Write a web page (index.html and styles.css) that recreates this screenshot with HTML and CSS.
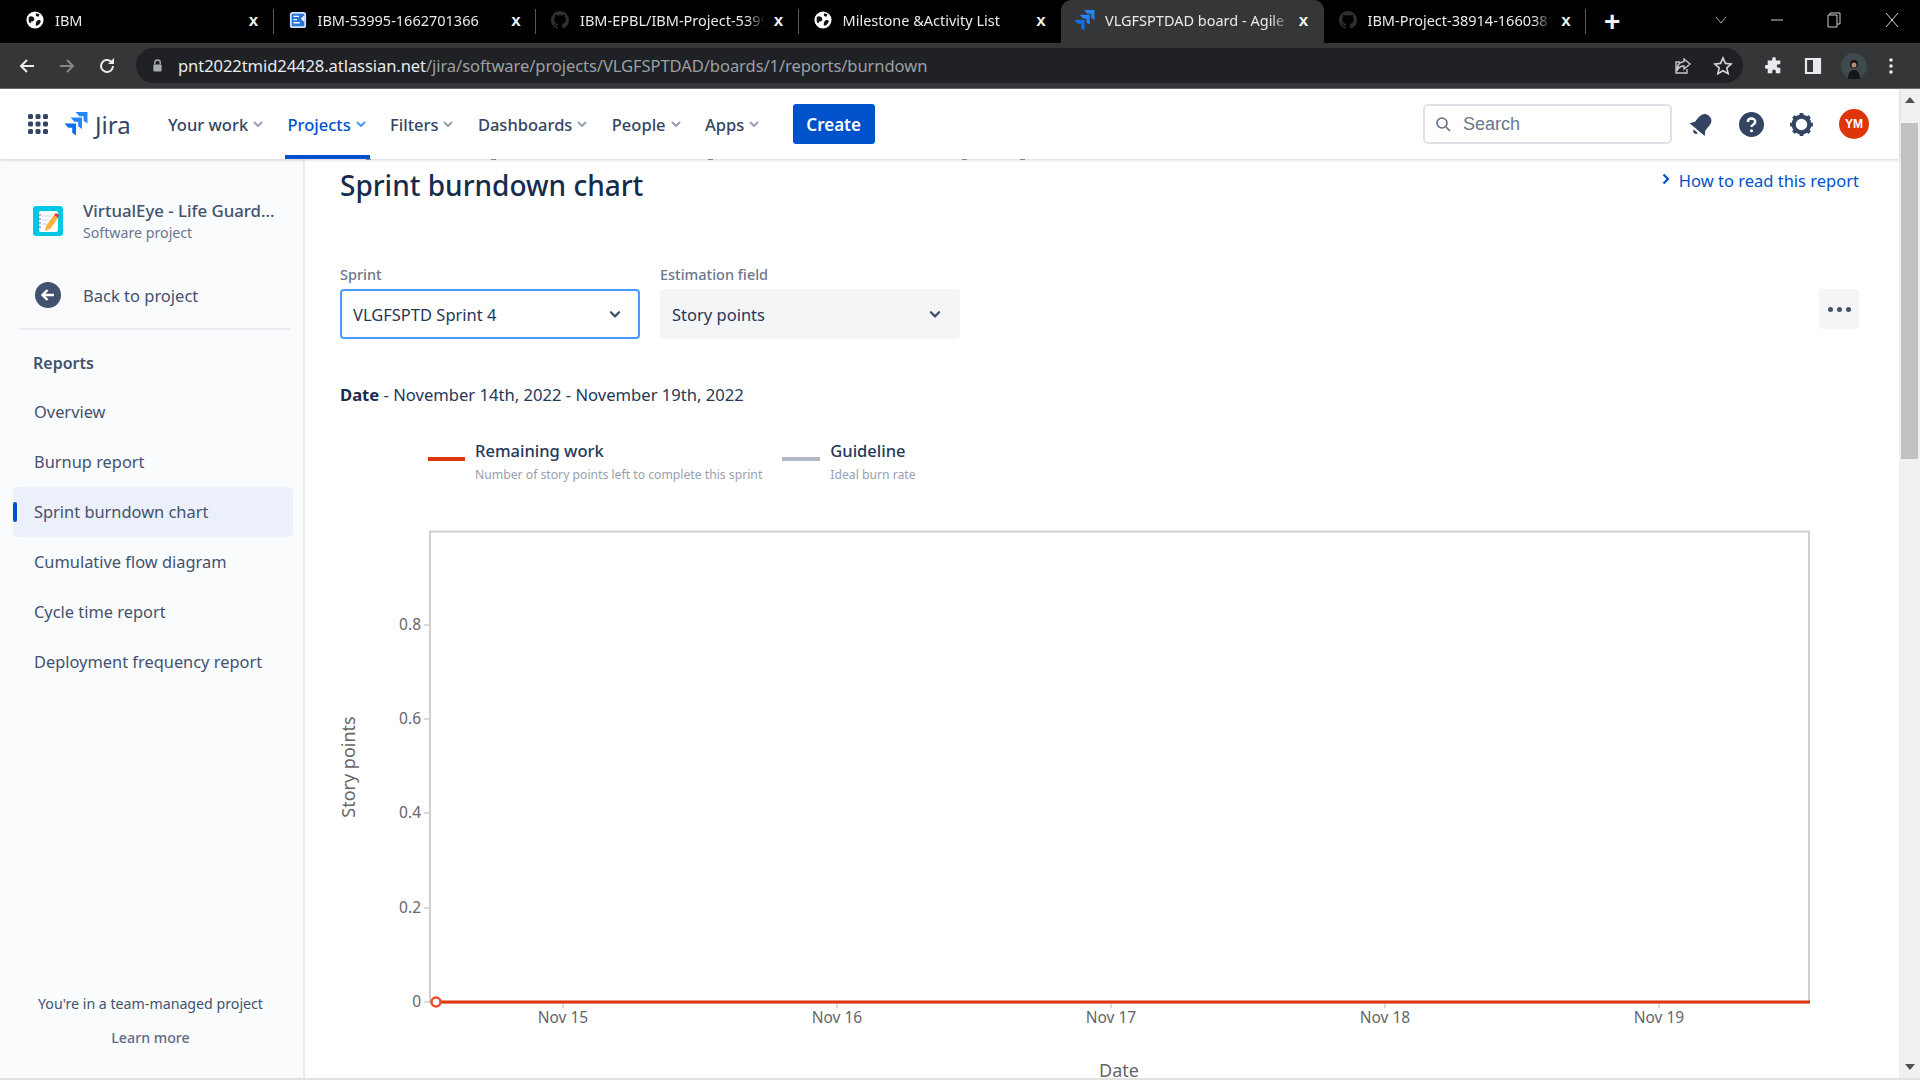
FILE: index.html
```html
<!DOCTYPE html>
<html lang="en">
<head>
    <meta charset="UTF-8">
    <title>VLGFSPTDAD board - Agile board - Jira</title>
    <link rel="stylesheet" href="styles.css">
</head>
<body>

    <svg class="defs">
        <symbol id="globe" viewBox="0 0 20 20">
            <circle cx="10" cy="10" r="9.500" fill="#fff"/>
            <path d="M3 7C5 5 8 6 9 8c1 2-1 4-3 3.500C5 15 4 13.500 3 11zM12 11c2-1.500 4-1 4.500.5-1 3.500-3.500 5-5.500 5-.5-2.500 0-4 1-5.500zM11 2.500l4 1-1 3-3-1z" fill="#111"/>
        </symbol>
        <symbol id="github" viewBox="0 0 16 16">
            <path fill="#2c2f33" d="M8 0C3.58 0 0 3.58 0 8c0 3.54 2.29 6.53 5.47 7.59.4.07.55-.17.55-.38 0-.19-.01-.82-.01-1.49-2.01.37-2.53-.49-2.69-.94-.09-.23-.48-.94-.82-1.13-.28-.15-.68-.52-.01-.53.63-.01 1.08.58 1.23.82.72 1.21 1.87.87 2.33.66.07-.52.28-.87.51-1.07-1.78-.2-3.64-.89-3.64-3.95 0-.87.31-1.59.82-2.15-.08-.2-.36-1.02.08-2.12 0 0 .67-.21 2.2.82.64-.18 1.32-.27 2-.27.68 0 1.36.09 2 .27 1.53-1.04 2.2-.82 2.2-.82.44 1.1.16 1.92.08 2.12.51.56.82 1.27.82 2.15 0 3.07-1.87 3.75-3.65 3.95.29.25.54.73.54 1.48 0 1.07-.01 1.93-.01 2.2 0 .21.15.46.55.38A8.013 8.013 0 0016 8c0-4.42-3.58-8-8-8z"/>
        </symbol>
        <symbol id="jira" viewBox="0 0 22 22">
            <path fill="#2684ff" d="M10.500 0H21.500V10.500L18 8V4H14z"/>
            <path fill="#2684ff" d="M6 5H16.500V15.500L13 13V9H9.500z"/>
            <path fill="#0f6fe8" d="M0.500 10.500H11V21.500L7.500 19V14.500H4z"/>
        </symbol>
        <symbol id="chev" viewBox="0 0 12 12">
            <path d="M2.500 4.500L6 8l3.500-3.500" fill="none" stroke="currentColor" stroke-width="2" stroke-linecap="round" stroke-linejoin="round"/>
        </symbol>
    </svg>

    <!-- browser tabs -->
    <div class="tabbar">
        <div class="tab">
            <svg class="favicon"><use href="#globe"/></svg>
            <span class="tab-title">IBM</span>
            <span class="tab-close">x</span>
        </div>
        <div class="tab">
            <svg class="favicon" viewBox="0 0 20 20">
                <rect x="1" y="1" width="18" height="18" rx="3" fill="#cfe3fb"/>
                <rect x="3" y="3" width="14" height="14" rx="1" fill="#2a74d8"/>
                <path d="M5 6h6M5 9.500h4M5 13h7" stroke="#fff" stroke-width="1.500"/>
                <path d="M17 5l-4 3.500 4 3.500z" fill="#fff"/>
            </svg>
            <span class="tab-title">IBM-53995-1662701366</span>
            <span class="tab-close">x</span>
        </div>
        <div class="tab">
            <svg class="favicon"><use href="#github"/></svg>
            <span class="tab-title">IBM-EPBL/IBM-Project-53995-1662701366</span>
            <span class="tab-close">x</span>
        </div>
        <div class="tab">
            <svg class="favicon"><use href="#globe"/></svg>
            <span class="tab-title">Milestone &amp;Activity List</span>
            <span class="tab-close">x</span>
        </div>
        <div class="tab active">
            <svg class="favicon"><use href="#jira"/></svg>
            <span class="tab-title">VLGFSPTDAD board - Agile board</span>
            <span class="tab-close">x</span>
        </div>
        <div class="tab">
            <svg class="favicon"><use href="#github"/></svg>
            <span class="tab-title">IBM-Project-38914-1660381</span>
            <span class="tab-close">x</span>
        </div>
        <span class="new-tab">+</span>
        <div class="window-btns">
            <svg width="12" height="8" viewBox="0 0 12 8"><path d="M1 1l5 6 5-6" fill="none" stroke="#aaa"/></svg>
            <svg width="12" height="12" viewBox="0 0 12 12"><path d="M0 6h12" stroke="#ccc"/></svg>
            <svg width="14" height="16" viewBox="0 0 14 16"><path d="M3 3V1h10v11h-3M1 3h9v12H1z" fill="none" stroke="#ccc"/></svg>
            <svg width="14" height="16" viewBox="0 0 14 16"><path d="M1 1l12 14M13 1L1 15" stroke="#ddd"/></svg>
        </div>
    </div>

    <!-- address bar -->
    <div class="toolbar">
        <svg class="tool" viewBox="0 0 18 18"><path d="M16 9H3M9 3L3 9l6 6" fill="none" stroke="#e8eaed" stroke-width="2"/></svg>
        <svg class="tool" viewBox="0 0 18 18"><path d="M2 9h13M9 3l6 6-6 6" fill="none" stroke="#84878a" stroke-width="2"/></svg>
        <svg class="tool" viewBox="0 0 18 18"><path d="M15 9a6 6 0 1 1-2-4.500" fill="none" stroke="#e8eaed" stroke-width="2"/><path d="M16 1v6h-6z" fill="#e8eaed"/></svg>
        <div class="omnibox">
            <svg class="lock" viewBox="0 0 12 14"><path d="M3 6V4a3 3 0 0 1 6 0v2" fill="none" stroke="#a8abaf" stroke-width="1.500"/><rect x="1.500" y="6" width="9" height="7.500" rx="1" fill="#a8abaf"/></svg>
            <span class="url"><b>pnt2022tmid24428.atlassian.net</b>/jira/software/projects/VLGFSPTDAD/boards/1/reports/burndown</span>
            <svg class="omni-icon" viewBox="0 0 20 20"><path d="M11 3l6 5-6 5V10C7 10 5 12 4 15c0-5 2-9 7-9.500zM14 13v4H3V6h4" fill="none" stroke="#c4c7c9" stroke-width="1.400"/></svg>
            <svg class="omni-icon" viewBox="0 0 20 20"><path d="M10 2l2.400 5.400 5.800.6-4.400 3.900 1.300 5.700L10 14.700 4.900 17.600l1.300-5.700L1.800 8l5.800-.6z" fill="none" stroke="#d6d8da" stroke-width="1.600"/></svg>
        </div>
        <svg class="tool ext" viewBox="0 0 20 20"><path d="M8 2a2 2 0 0 1 4 0v2h5v4h-2a2 2 0 0 0 0 4h2v6H12v-2a2 2 0 0 0-4 0v2H3v-5H1.500a2 2 0 0 1 0-4H3V4h5z" fill="#e8eaed"/></svg>
        <svg class="tool" viewBox="0 0 18 18"><path d="M2 2h14v14H2z" fill="none" stroke="#e8eaed" stroke-width="2.200"/><path d="M9 2h7v14H9z" fill="#e8eaed"/></svg>
        <svg class="profile" viewBox="0 0 26 26"><circle cx="13" cy="13" r="13" fill="#3f4a4e"/><circle cx="13" cy="11" r="4" fill="#17110e"/><path d="M7 26c0-7 3-9 6-9s6 2 6 9z" fill="#141518"/><circle cx="13" cy="12" r="2.500" fill="#b68a6c"/></svg>
        <svg class="dots" viewBox="0 0 4 18"><circle cx="2" cy="3" r="1.800" fill="#e8eaed"/><circle cx="2" cy="9" r="1.800" fill="#e8eaed"/><circle cx="2" cy="15" r="1.800" fill="#e8eaed"/></svg>
    </div>

    <div class="viewport">
        <div class="page">
            <!-- jira top nav -->
            <nav class="topnav">
                <svg class="apps" viewBox="0 0 20 20" fill="#344563">
                    <rect x="0" y="0" width="5" height="5" rx="1.500"/><rect x="7.500" y="0" width="5" height="5" rx="1.500"/><rect x="15" y="0" width="5" height="5" rx="1.500"/>
                    <rect x="0" y="7.500" width="5" height="5" rx="1.500"/><rect x="7.500" y="7.500" width="5" height="5" rx="1.500"/><rect x="15" y="7.500" width="5" height="5" rx="1.500"/>
                    <rect x="0" y="15" width="5" height="5" rx="1.500"/><rect x="7.500" y="15" width="5" height="5" rx="1.500"/><rect x="15" y="15" width="5" height="5" rx="1.500"/>
                </svg>
                <svg class="jira-mark"><use href="#jira"/></svg>
                <span class="jira-word">Jira</span>
                <a class="nav-item">Your work<svg class="nav-chev"><use href="#chev"/></svg></a>
                <a class="nav-item current">Projects<svg class="nav-chev"><use href="#chev"/></svg></a>
                <a class="nav-item">Filters<svg class="nav-chev"><use href="#chev"/></svg></a>
                <a class="nav-item">Dashboards<svg class="nav-chev"><use href="#chev"/></svg></a>
                <a class="nav-item">People<svg class="nav-chev"><use href="#chev"/></svg></a>
                <a class="nav-item">Apps<svg class="nav-chev"><use href="#chev"/></svg></a>
                <button class="create">Create</button>
                <div class="nav-right">
                    <div class="search">
                        <svg class="search-icon" viewBox="0 0 16 16"><circle cx="7" cy="7" r="5" fill="none" stroke="#5e6c84" stroke-width="1.600"/><path d="M11 11l4 4" stroke="#5e6c84" stroke-width="1.600"/></svg>
                        <span>Search</span>
                    </div>
                    <svg class="nav-icon" viewBox="0 0 24 24"><g transform="rotate(40 12 12)" fill="#344563"><path d="M12 1C7.500 1 5.500 4 5.500 8.500V14L2.500 18.500h19L18.500 14V8.500C18.500 4 16.500 1 12 1z"/><path d="M9.500 20.500a2.500 2.500 0 0 0 5 0z"/></g></svg>
                    <svg class="nav-icon" viewBox="0 0 24 24"><circle cx="12" cy="12" r="12" fill="#344563"/><path d="M8.500 9.500c0-2 1.500-3.300 3.500-3.300s3.600 1.300 3.600 3.200c0 2.800-3.600 2.500-3.600 5.100" fill="none" stroke="#fff" stroke-width="2.300"/><circle cx="12" cy="18" r="1.500" fill="#fff"/></svg>
                    <svg class="nav-icon" viewBox="0 0 24 24"><circle cx="12" cy="12" r="7.500" fill="none" stroke="#344563" stroke-width="4"/><path d="M12 1v4M12 19v4M1 12h4M19 12h4M4.200 4.200l2.800 2.800M17 17l2.800 2.800M4.200 19.800L7 17M17 7l2.800-2.800" stroke="#344563" stroke-width="3.600"/></svg>
                    <span class="avatar">YM</span>
                </div>
            </nav>

            <div class="main">
                <aside class="sidebar">
                    <div class="project">
                        <svg class="project-icon" viewBox="0 0 30 30">
                            <rect width="30" height="30" rx="3" fill="#00c7e6"/>
                            <rect x="6" y="5" width="19" height="21" rx="2" fill="#fff"/>
                            <path d="M9 10h9M9 14h7M9 18h5" stroke="#b9d6e6" stroke-width="1.200"/>
                            <path d="M5 9h3M5 13h3M5 17h3M5 21h3" stroke="#5b6f86" stroke-width="1.200"/>
                            <path d="M21 9l4 3-8 11-5 2 1-5z" fill="#fbb13c"/>
                            <path d="M21 9l2-2 3 2-1 3z" fill="#e5383b"/>
                        </svg>
                        <div>
                            <div class="project-name">VirtualEye - Life Guard...</div>
                            <div class="project-type">Software project</div>
                        </div>
                    </div>
                    <div class="back">
                        <svg class="back-icon" viewBox="0 0 26 26"><circle cx="13" cy="13" r="13" fill="#42526e"/><path d="M19 13H8M12.500 8l-5 5 5 5" fill="none" stroke="#fff" stroke-width="2.400"/></svg>
                        <span>Back to project</span>
                    </div>
                    <h3 class="side-title">Reports</h3>
                    <ul class="side-list">
                        <li>Overview</li>
                        <li>Burnup report</li>
                        <li class="selected">Sprint burndown chart</li>
                        <li>Cumulative flow diagram</li>
                        <li>Cycle time report</li>
                        <li>Deployment frequency report</li>
                    </ul>
                    <div class="side-foot">
                        <p>You're in a team-managed project</p>
                        <p class="learn">Learn more</p>
                    </div>
                </aside>

                <section class="content">
                    <!-- bottoms of the scrolled away breadcrumb letters -->
                    <div class="peek"><i></i><i></i><i></i><i></i><i></i></div>
                    <div class="title-row">
                        <h1>Sprint burndown chart</h1>
                        <a class="how-to">
                            <svg class="how-chev" viewBox="0 0 10 12"><path d="M2.500 1.500L7 6l-4.500 4.500" fill="none" stroke="#0052cc" stroke-width="2.200"/></svg>
                            How to read this report
                        </a>
                    </div>
                    <div class="filters">
                        <div class="field">
                            <label>Sprint</label>
                            <div class="select focused">VLGFSPTD Sprint 4<svg class="select-chev"><use href="#chev"/></svg></div>
                        </div>
                        <div class="field">
                            <label>Estimation field</label>
                            <div class="select">Story points<svg class="select-chev"><use href="#chev"/></svg></div>
                        </div>
                        <button class="more"><i></i><i></i><i></i></button>
                    </div>
                    <p class="date-range"><b>Date</b> - November 14th, 2022 - November 19th, 2022</p>
                    <div class="legend">
                        <div class="legend-item">
                            <span class="swatch red"></span>
                            <div><div class="legend-name">Remaining work</div><div class="legend-sub">Number of story points left to complete this sprint</div></div>
                        </div>
                        <div class="legend-item">
                            <span class="swatch grey"></span>
                            <div><div class="legend-name">Guideline</div><div class="legend-sub">Ideal burn rate</div></div>
                        </div>
                    </div>
                    <svg class="chart" width="1520" height="560" viewBox="0 0 1520 560">
                        <rect x="90" y="11.500" width="1379" height="471" fill="#fff" stroke="#cfcfcf" stroke-width="2"/>
                        <g stroke="#cfcfcf" stroke-width="1.500">
                            <path d="M84 105h6M84 199h6M84 293h6M84 388h6M84 482h6"/>
                            <path d="M223 482v6M497 482v6M771 482v6M1045 482v6M1319 482v6"/>
                        </g>
                        <g class="tick" text-anchor="end">
                            <text x="81" y="110">0.8</text>
                            <text x="81" y="204">0.6</text>
                            <text x="81" y="298">0.4</text>
                            <text x="81" y="393">0.2</text>
                            <text x="81" y="487">0</text>
                        </g>
                        <g class="tick" text-anchor="middle">
                            <text x="223" y="503">Nov 15</text>
                            <text x="497" y="503">Nov 16</text>
                            <text x="771" y="503">Nov 17</text>
                            <text x="1045" y="503">Nov 18</text>
                            <text x="1319" y="503">Nov 19</text>
                        </g>
                        <path d="M96 482H1470" stroke="#de350b" stroke-width="3"/>
                        <circle cx="96" cy="482" r="4.500" fill="#fff" stroke="#e9502c" stroke-width="2.500"/>
                        <text class="axis" x="779" y="557" text-anchor="middle">Date</text>
                        <text class="axis" x="15" y="247" text-anchor="middle" transform="rotate(-90 15 247)">Story points</text>
                    </svg>
                </section>
            </div>
        </div>

        <div class="scrollbar">
            <svg class="sb-arrow" viewBox="0 0 10 6"><path d="M5 0l5 6H0z" fill="#505050"/></svg>
            <div class="sb-track"><div class="sb-thumb"></div></div>
            <svg class="sb-arrow" viewBox="0 0 10 6"><path d="M5 6l5-6H0z" fill="#505050"/></svg>
        </div>
    </div>
    <div class="bottom-strip"></div>

</body>
</html>
```

FILE: styles.css
```css
* {
    box-sizing: border-box;
}
html, body {
    margin: 0;
    height: 1080px;
    overflow: hidden;
}
body {
    font-family: "Noto Sans", "Open Sans", sans-serif;
    color: #172b4d;
    background: #fff;
    display: flex;
    flex-direction: column;
}
.defs {
    display: none;
}

/* browser chrome */
.tabbar {
    height: 43px;
    background: #000;
    display: flex;
    align-items: stretch;
    padding-left: 11px;
    flex: none;
}
.tab {
    width: 262.5px;
    display: flex;
    align-items: center;
    padding: 0 12px 3px 15px;
    position: relative;
    font-family: "Noto Sans", sans-serif;
    font-size: 14.5px;
    color: #e8eaed;
}
.tab:not(.active):not(:nth-child(4)):after {
    content: "";
    position: absolute;
    right: 0;
    top: 9px;
    height: 25px;
    border-right: 1px solid #55585c;
}
.tab.active {
    background: #353638;
    border-radius: 10px 10px 0 0;
}
.favicon {
    width: 18px;
    height: 18px;
    flex: none;
    margin-right: 11px;
}
.tab.active .favicon {
    width: 21px;
    height: 21px;
    margin: 0 10px 0 -2px;
}
.tab-title {
    flex: 1;
    white-space: nowrap;
    overflow: hidden;
    -webkit-mask-image: linear-gradient(to left, transparent 0, #000 18px);
    mask-image: linear-gradient(to left, transparent 0, #000 18px);
}
.tab-close {
    width: 16px;
    margin-left: 6px;
    text-align: center;
    font-family: "Liberation Sans", sans-serif;
    font-size: 17px;
    font-weight: bold;
    color: #f1f3f4;
    line-height: 1;
}
.new-tab {
    align-self: center;
    margin-left: 18px;
    font-family: "Liberation Sans", sans-serif;
    font-size: 28px;
    font-weight: bold;
    color: #f1f3f4;
}
.window-btns {
    margin-left: auto;
    display: flex;
    align-items: center;
    gap: 44px;
    padding-right: 21px;
    padding-bottom: 4px;
}
.toolbar {
    height: 46px;
    flex: none;
    background: #353638;
    border-bottom: 1px solid #6a6b6d;
    display: flex;
    align-items: center;
    padding: 0 16px 0 18px;
}
.tool {
    width: 18px;
    height: 18px;
    flex: none;
    margin-right: 22px;
}
.omnibox {
    height: 35px;
    width: 1607px;
    margin: 0 22px 0 -2px;
    background: #202124;
    border-radius: 18px;
    display: flex;
    align-items: center;
    padding: 0 10px 0 16px;
    flex: none;
}
.lock {
    width: 11px;
    height: 13px;
    margin-right: 15px;
}
.url {
    flex: 1;
    font-size: 16.6px;
    color: #9aa0a6;
    letter-spacing: -0.1px;
}
.url b {
    font-weight: normal;
    color: #e8eaed;
}
.omni-icon {
    width: 20px;
    height: 20px;
    margin-left: 20px;
}
.ext {
    margin-right: 21px;
}
.profile {
    width: 26px;
    height: 26px;
    margin-left: -3px;
    flex: none;
}
.dots {
    width: 4px;
    height: 18px;
    margin-left: 22px;
    flex: none;
}

/* page area */
.viewport {
    flex: 1;
    min-height: 0;
    display: flex;
}
.page {
    flex: 1;
    min-width: 0;
    display: flex;
    flex-direction: column;
}
.topnav {
    height: 70px;
    flex: none;
    display: flex;
    align-items: center;
    padding-left: 28px;
    position: relative;
    z-index: 2;
    background: #fff;
    box-shadow: 0 1px 3px rgba(9, 30, 66, 0.2);
}
.apps {
    width: 20px;
    height: 20px;
    margin-right: 16px;
}
.jira-mark {
    width: 24px;
    height: 24px;
    margin-right: 7px;
}
.jira-word {
    font-size: 24px;
    color: #344563;
    margin-right: 33px;
    width: 37px;
}
.nav-item {
    height: 70px;
    display: flex;
    align-items: center;
    padding: 0 3px;
    margin-right: 17.4px;
    font-size: 16.5px;
    font-weight: 500;
    color: #344563;
    position: relative;
    white-space: nowrap;
}
.nav-chev {
    width: 12px;
    height: 12px;
    margin-left: 4px;
    color: #97a0af;
}
.nav-item.current {
    color: #0052cc;
}
.nav-item.current .nav-chev {
    color: #4c9aff;
}
.nav-item.current:after {
    content: "";
    position: absolute;
    left: 0;
    right: 0;
    bottom: 0;
    height: 4px;
    background: #0052cc;
}
.create {
    width: 82px;
    height: 40px;
    margin-left: 12px;
    border: none;
    border-radius: 3px;
    background: #0052cc;
    color: #fff;
    font-family: inherit;
    font-size: 17px;
    font-weight: 600;
}
.nav-right {
    margin-left: auto;
    display: flex;
    align-items: center;
    padding-right: 30px;
}
.search {
    width: 249px;
    height: 40px;
    border: 2px solid #dfe1e6;
    border-radius: 5px;
    display: flex;
    align-items: center;
    padding-left: 10px;
    margin-right: 17px;
    font-family: "Liberation Sans", sans-serif;
    font-size: 18px;
    color: #6b778c;
}
.search-icon {
    width: 16px;
    height: 16px;
    margin-right: 12px;
}
.nav-icon {
    width: 25px;
    height: 25px;
    margin-right: 25px;
}
.nav-icon:nth-of-type(4) {
    margin-right: 24px;
}
.avatar {
    width: 30px;
    height: 30px;
    border-radius: 50%;
    background: #de350b;
    color: #fff;
    font-family: "Liberation Sans", sans-serif;
    font-size: 12px;
    font-weight: bold;
    text-align: center;
    line-height: 30px;
}
.main {
    flex: 1;
    min-height: 0;
    display: flex;
}

/* sidebar */
.sidebar {
    width: 305px;
    flex: none;
    background: #fafbfc;
    border-right: 2px solid #ebecf0;
    display: flex;
    flex-direction: column;
    padding: 47px 10px 0 13px;
    color: #42526e;
    font-size: 16.4px;
}
.project {
    display: flex;
    align-items: center;
    padding-left: 20px;
    height: 30px;
}
.project-icon {
    width: 30px;
    height: 30px;
    margin-right: 20px;
}
.project-name {
    font-size: 16.8px;
    font-weight: 500;
    line-height: 24px;
    white-space: nowrap;
}
.project-type {
    font-size: 14.2px;
    line-height: 20px;
    color: #6b778c;
}
.back {
    display: flex;
    align-items: center;
    margin: 46px 0 0 22px;
    height: 26px;
    font-size: 16.5px;
}
.back-icon {
    width: 26px;
    height: 26px;
    margin-right: 22px;
}
.side-title {
    margin: 20px 3px 0 7px;
    padding: 20px 0 0 13px;
    border-top: 2px solid #ebecf0;
    font-size: 16px;
    font-weight: 600;
    line-height: 26px;
}
.side-list {
    list-style: none;
    margin: 11px 0 0;
    padding: 0;
}
.side-list li {
    height: 50px;
    line-height: 50px;
    padding-left: 21px;
    white-space: nowrap;
}
.side-list .selected {
    background: #ebf0fa;
    border-radius: 5px;
    position: relative;
}
.side-list .selected:before {
    content: "";
    position: absolute;
    left: 0;
    top: 15px;
    width: 4px;
    height: 20px;
    background: #0052cc;
    border-radius: 2px;
}
.side-foot {
    margin-top: auto;
    text-align: center;
    font-size: 14.2px;
    padding: 0 5px 23px 0;
}
.side-foot p {
    margin: 0;
    line-height: 34px;
}
.side-foot .learn {
    color: #5e6c84;
    font-weight: 500;
}

/* report content */
.content {
    flex: 1;
    min-width: 0;
    height: 920px;
    overflow: hidden;
    padding: 0 40px 0 35px;
    position: relative;
}
.peek {
    height: 1px;
    display: flex;
    padding-left: 26px;
    gap: 120px;
}
.peek i {
    width: 5px;
    height: 1px;
    background: #8a94a6;
}
.peek i:nth-child(3) {
    margin-left: 92px;
}
.peek i:nth-child(4) {
    margin-left: 129px;
}
.peek i:nth-child(5) {
    margin-left: -67px;
}
.title-row {
    display: flex;
    justify-content: space-between;
    align-items: flex-start;
    height: 100px;
    padding-top: 3px;
}
h1 {
    margin: 0;
    font-size: 28px;
    font-weight: 500;
    line-height: 44px;
    color: #172b4d;
}
.how-to {
    display: flex;
    align-items: center;
    font-size: 16.5px;
    line-height: 24px;
    color: #0052cc;
    padding-top: 6px;
}
.how-chev {
    width: 10px;
    height: 12px;
    margin: -4px 8px 0 0;
}
.filters {
    display: flex;
    gap: 20px;
    align-items: flex-end;
    position: relative;
}
.field label {
    display: block;
    height: 29px;
    font-size: 14.5px;
    font-weight: 500;
    line-height: 28px;
    color: #6b778c;
}
.select {
    width: 300px;
    height: 50px;
    background: #f4f5f7;
    border-radius: 4px;
    display: flex;
    align-items: center;
    justify-content: space-between;
    padding: 0 18px 0 12px;
    font-size: 16.5px;
    color: #253858;
}
.select.focused {
    background: #fff;
    border: 2px solid #4c9aff;
    padding-left: 11px;
    padding-right: 16px;
}
.select-chev {
    width: 14px;
    height: 14px;
    color: #42526e;
}
.more {
    position: absolute;
    right: 0;
    bottom: 10px;
    width: 40px;
    height: 40px;
    border: none;
    border-radius: 4px;
    background: #f4f5f7;
    display: flex;
    align-items: center;
    justify-content: center;
    gap: 4px;
}
.more i {
    width: 5px;
    height: 5px;
    border-radius: 50%;
    background: #42526e;
}
.date-range {
    margin: 42px 0 0;
    font-size: 16.6px;
    line-height: 28px;
    color: #253858;
}
.date-range b {
    font-weight: 700;
    color: #172b4d;
}
.legend {
    display: flex;
    gap: 20px;
    margin: 28px 0 0 88px;
}
.legend-item {
    display: flex;
    align-items: flex-start;
}
.swatch {
    width: 37px;
    height: 4px;
    margin: 20px 10px 0 0;
}
.swatch.red {
    background: #de350b;
}
.swatch.grey {
    width: 38px;
    background: #b3b9c4;
}
.legend-name {
    font-size: 16.5px;
    font-weight: 500;
    line-height: 28px;
    color: #253858;
}
.legend-sub {
    font-size: 12.2px;
    line-height: 20px;
    color: #97a0af;
}
.chart {
    display: block;
    margin-top: 35px;
}
.tick text {
    font-family: "Noto Sans", sans-serif;
    font-size: 15.5px;
    fill: #666;
}
.axis {
    font-family: "Noto Sans", sans-serif;
    font-size: 18px;
    fill: #666;
}

/* window scrollbar */
.scrollbar {
    width: 21px;
    flex: none;
    background: #f1f1f1;
    display: flex;
    flex-direction: column;
    align-items: center;
    padding: 8px 0;
}
.sb-arrow {
    width: 10px;
    height: 6px;
    flex: none;
}
.sb-track {
    flex: 1;
    width: 100%;
    padding: 20px 2px 0 2px;
}
.sb-thumb {
    height: 336px;
    background: #c1c1c1;
}
.bottom-strip {
    height: 2px;
    flex: none;
    background: #e2e2e2;
}
```
